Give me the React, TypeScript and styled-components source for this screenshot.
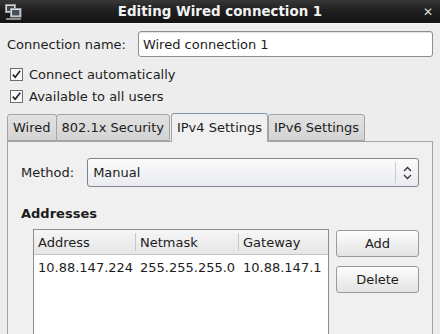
import styled, { createGlobalStyle } from 'styled-components';

const GlobalStyle = createGlobalStyle`
  html, body {
    margin: 0;
    padding: 0;
    background: #ededed;
  }
  body {
    font-family: "DejaVu Sans", "Noto Sans", sans-serif;
    font-size: 13px;
    color: #1c1c1c;
  }
`;

const NetworkIcon = () => (
  <svg width="17" height="17" viewBox="0 0 17 17">
    <rect x="0.5" y="0.5" width="10" height="8" fill="#d8d8d8" stroke="#9a9a9a" />
    <rect x="2" y="2" width="7" height="5" fill="#3c4550" />
    <rect x="5.5" y="4.5" width="10.5" height="8.5" fill="#e4e4e4" stroke="#a0a0a0" />
    <rect x="7" y="6" width="7.5" height="5.5" fill="#46505c" />
    <rect x="1" y="14" width="15" height="2" fill="#8a8a8a" />
  </svg>
);

const CheckIcon = () => (
  <svg width="13" height="13" viewBox="0 0 13 13">
    <rect x="0.5" y="0.5" width="12" height="12" fill="#fafafa" stroke="#6e6e6e" />
    <path d="M2.8 6.6 L5.2 9.3 L10.2 2.8" fill="none" stroke="#222" strokeWidth="1.6" />
  </svg>
);

const ComboArrows = () => (
  <svg width="9" height="14" viewBox="0 0 9 14">
    <path d="M1 5 L4.5 1.5 L8 5" fill="none" stroke="#333" strokeWidth="1.3" />
    <path d="M1 9 L4.5 12.5 L8 9" fill="none" stroke="#333" strokeWidth="1.3" />
  </svg>
);

const App = () => {
  return (
    <Window>
      <GlobalStyle />
      <TitleBar>
        <TitleIcon>
          <NetworkIcon />
        </TitleIcon>
        <TitleText>Editing Wired connection 1</TitleText>
        <CloseButton>✕</CloseButton>
      </TitleBar>

      <Body>
        <NameRow>
          <span>Connection name:</span>
          <TextInput defaultValue="Wired connection 1" />
        </NameRow>

        <CheckList>
          <CheckRow>
            <CheckIcon />
            <span>Connect automatically</span>
          </CheckRow>
          <CheckRow>
            <CheckIcon />
            <span>Available to all users</span>
          </CheckRow>
        </CheckList>

        <TabStrip>
          <Tab>Wired</Tab>
          <Tab>802.1x Security</Tab>
          <Tab $active>IPv4 Settings</Tab>
          <Tab>IPv6 Settings</Tab>
        </TabStrip>

        <Panel>
          <MethodRow>
            <span>Method:</span>
            <Combo>
              <ComboValue>Manual</ComboValue>
              <ComboButton>
                <ComboArrows />
              </ComboButton>
            </Combo>
          </MethodRow>

          <SectionTitle>Addresses</SectionTitle>

          <AddressArea>
            <Table>
              <HeaderRow>
                <HeaderCell>Address</HeaderCell>
                <HeaderCell>Netmask</HeaderCell>
                <HeaderCell $last>Gateway</HeaderCell>
              </HeaderRow>
              <DataRow>
                <DataCell>10.88.147.224</DataCell>
                <DataCell>255.255.255.0</DataCell>
                <DataCell>10.88.147.1</DataCell>
              </DataRow>
            </Table>
            <ButtonColumn>
              <PushButton>Add</PushButton>
              <PushButton>Delete</PushButton>
            </ButtonColumn>
          </AddressArea>
        </Panel>
      </Body>
    </Window>
  );
};

const Window = styled.div`
  width: 440px;
  height: 334px;
  overflow: hidden;
  display: flex;
  flex-direction: column;
  background: #ededed;
`;

const TitleBar = styled.div`
  height: 23px;
  flex-shrink: 0;
  display: grid;
  grid-template-columns: 40px 1fr 40px;
  align-items: center;
  background: linear-gradient(#383838, #1f1f1f 45%, #141414);
  border-bottom: 1px solid #f6f6f6;
`;

const TitleIcon = styled.div`
  display: flex;
  padding-left: 5px;
  padding-top: 1px;
`;

const TitleText = styled.div`
  text-align: center;
  color: #f2f2f2;
  font-weight: bold;
  font-size: 13.4px;
  white-space: nowrap;
`;

const CloseButton = styled.div`
  text-align: right;
  padding-right: 7px;
  color: #dedede;
  font-size: 12px;
  font-weight: bold;
`;

const Body = styled.div`
  flex: 1;
  display: flex;
  flex-direction: column;
  padding: 7px 7px 0;
  min-height: 0;
`;

const NameRow = styled.div`
  display: flex;
  align-items: center;
  gap: 12px;
  height: 26px;
`;

const TextInput = styled.input`
  flex: 1;
  height: 26px;
  box-sizing: border-box;
  border: 1px solid #8f8f8f;
  border-radius: 3px;
  background: #fff;
  box-shadow: inset 0 1px 1px rgba(0, 0, 0, 0.12);
  padding: 0 4px;
  font: inherit;
  color: #1c1c1c;
  outline: none;
`;

const CheckList = styled.div`
  margin-top: 6px;
  display: flex;
  flex-direction: column;
`;

const CheckRow = styled.div`
  height: 22px;
  display: flex;
  align-items: center;
  gap: 6px;
  padding-left: 3px;
`;

const TabStrip = styled.div`
  margin-top: 6px;
  height: 28px;
  display: flex;
  align-items: flex-end;
`;

const Tab = styled.div<{ $active?: boolean }>`
  box-sizing: border-box;
  height: ${(p) => (p.$active ? '29px' : '27px')};
  padding: 0 5px;
  margin-left: ${(p) => (p.$active ? '1px' : '-1px')};
  margin-right: ${(p) => (p.$active ? '1px' : '0')};
  margin-bottom: ${(p) => (p.$active ? '-1px' : '0')};
  display: flex;
  align-items: center;
  padding-bottom: ${(p) => (p.$active ? '2px' : '0')};
  border: 1px solid #a4a4a4;
  border-top-color: ${(p) => (p.$active ? '#7f93ad' : '#a4a4a4')};
  border-bottom: ${(p) => (p.$active ? 'none' : '1px solid #a4a4a4')};
  border-radius: 3px 3px 0 0;
  background: ${(p) =>
    p.$active ? '#f0f0f0' : 'linear-gradient(#e2e2e2, #d3d3d3)'};
  position: relative;
  z-index: ${(p) => (p.$active ? 1 : 0)};
  white-space: nowrap;

  &:first-child {
    margin-left: 0;
  }
`;

const Panel = styled.div`
  flex: 1;
  border: 1px solid #a4a4a4;
  border-bottom: none;
  background: #f0f0f0;
  padding: 16px 13px 0;
  display: flex;
  flex-direction: column;
`;

const MethodRow = styled.div`
  display: flex;
  align-items: center;
  gap: 13px;
`;

const Combo = styled.div`
  flex: 1;
  height: 29px;
  box-sizing: border-box;
  display: flex;
  align-items: stretch;
  border: 1px solid #7c8490;
  border-radius: 3px;
  background: linear-gradient(#fbfbfb, #e9ebef);
`;

const ComboValue = styled.div`
  flex: 1;
  display: flex;
  align-items: center;
  padding-left: 5px;
`;

const ComboButton = styled.div`
  width: 22px;
  display: flex;
  align-items: center;
  justify-content: center;
  border-left: 1px solid #c8ccd2;
  margin: 3px 0;
`;

const SectionTitle = styled.div`
  margin-top: 19px;
  font-weight: bold;
  line-height: 16px;
`;

const AddressArea = styled.div`
  margin-top: 7px;
  padding-left: 12px;
  display: flex;
  gap: 7px;
  flex: 1;
`;

const Table = styled.div`
  flex: 1;
  min-height: 120px;
  border: 1px solid #8e8e8e;
  background: #fff;
`;

const HeaderRow = styled.div`
  display: grid;
  grid-template-columns: 102px 103px 1fr;
  height: 24px;
  background: linear-gradient(#f6f6f6, #e6e6e6);
  border-bottom: 1px solid #c4c4c4;
`;

const HeaderCell = styled.div<{ $last?: boolean }>`
  display: flex;
  align-items: center;
  padding-left: 4px;
  border-right: ${(p) => (p.$last ? 'none' : '1px solid #c8c8c8')};
  margin: ${(p) => (p.$last ? '0' : '3px 0')};
`;

const DataRow = styled.div`
  display: grid;
  grid-template-columns: 102px 103px 1fr;
  height: 24px;
  align-items: center;
`;

const DataCell = styled.div`
  padding-left: 4px;
  white-space: nowrap;
`;

const ButtonColumn = styled.div`
  width: 83px;
  display: flex;
  flex-direction: column;
  gap: 9px;
  padding-top: 1px;
`;

const PushButton = styled.button`
  height: 27px;
  box-sizing: border-box;
  border: 1px solid #9a9a9a;
  border-radius: 3px;
  background: linear-gradient(#fdfdfd, #e3e3e3);
  font: inherit;
  color: #1c1c1c;
  padding: 0;
`;

export default App;
